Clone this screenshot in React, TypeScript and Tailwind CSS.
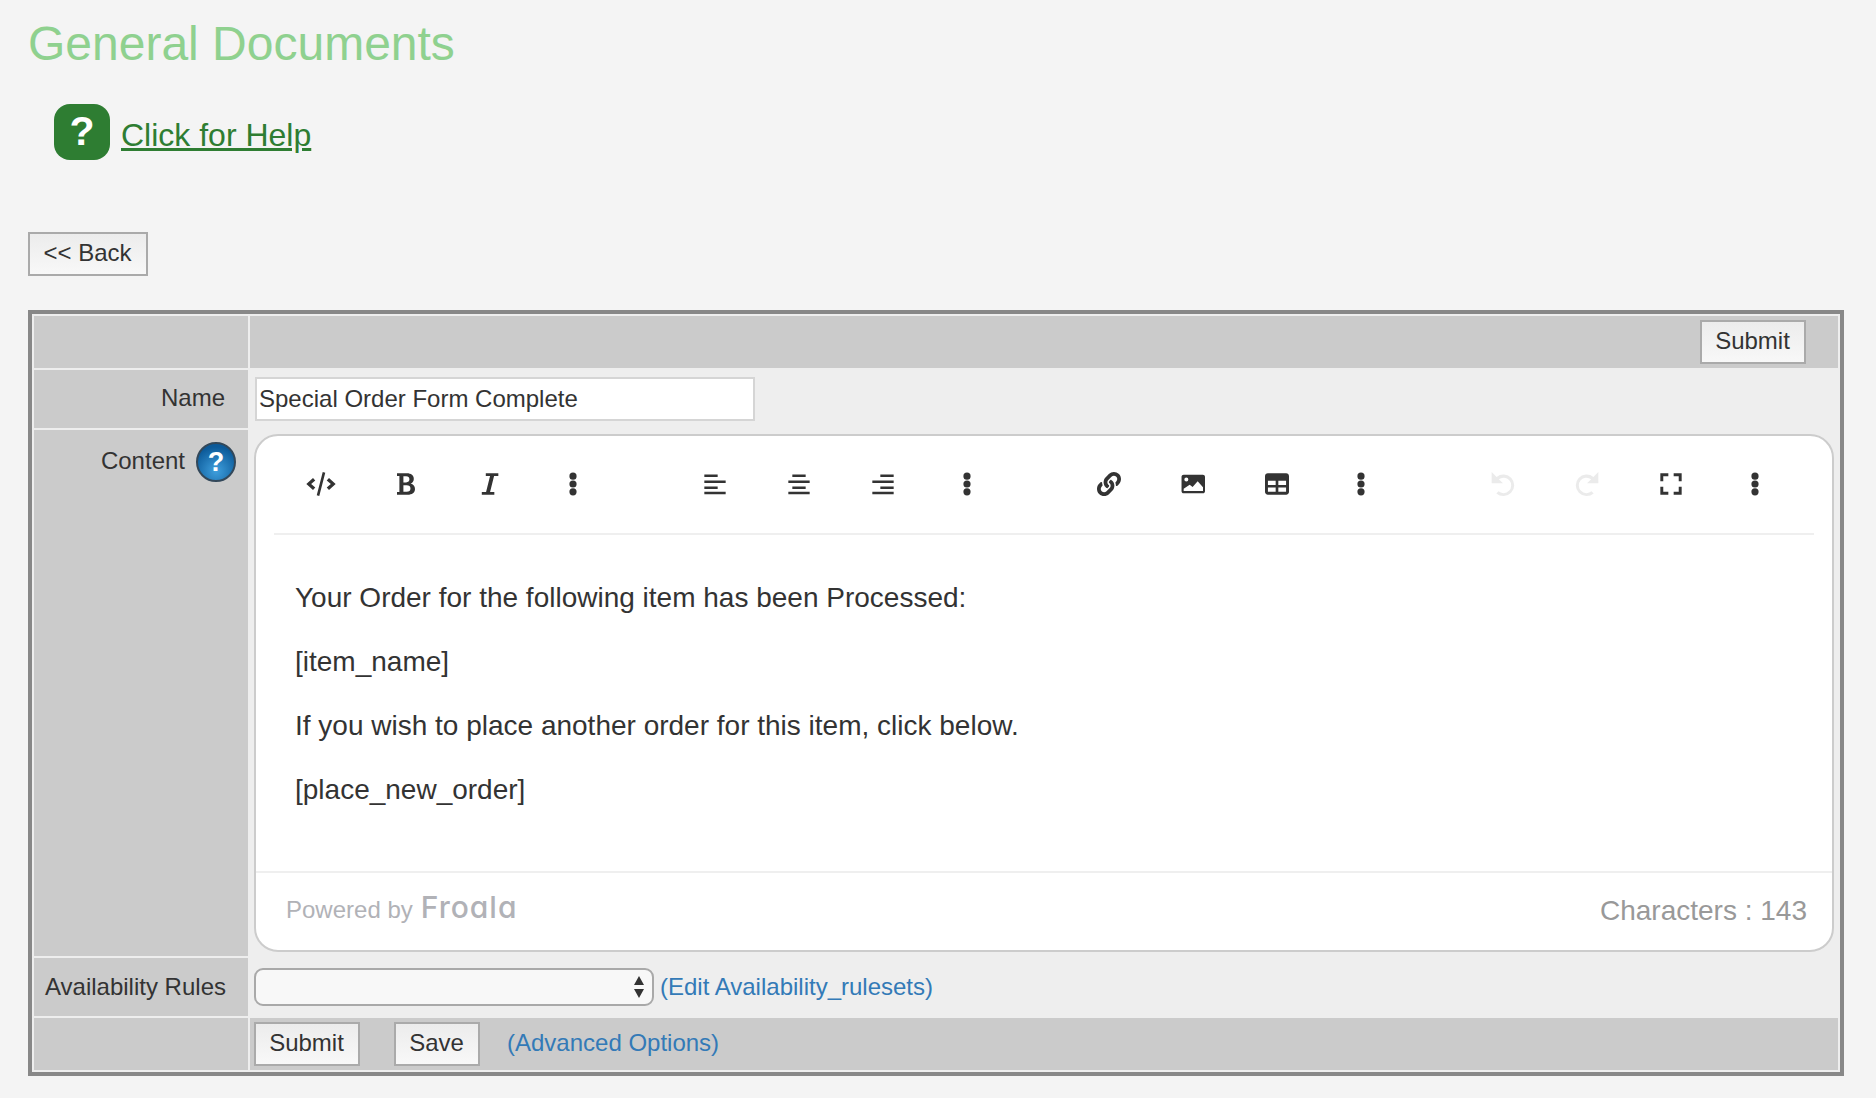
import React from "react";
import { FaLink } from "react-icons/fa";

type IconProps = { d: string; color?: string };

// small 24x24 toolbar glyph, evenodd so the holes stay open
const Glyph: React.FC<IconProps> = ({ d, color = "#333333" }) => (
  <svg width="32" height="32" viewBox="0 0 24 24" fill={color} fillRule="evenodd">
    <path d={d} />
  </svg>
);

const paths = {
  code: "M6 7.500 1 12l5 4.500 1.700-1.800L4.600 12l3.100-2.700zM18 7.500 23 12l-5 4.500-1.700-1.800 3.100-2.700-3.100-2.700zM13.300 3l1.900.5-4.500 17.500-1.900-.5z",
  bold: "M6 4h7.400c3.200 0 5.200 1.600 5.200 4.200 0 1.600-.9 2.900-2.400 3.500 2 .5 3.300 2 3.300 4 0 2.800-2.200 4.300-5.500 4.300H6v-2h1.800V6H6zM10.800 6.200v4.600h2c1.700 0 2.500-.8 2.500-2.300s-.8-2.300-2.500-2.300zM10.800 12.900v4.900h2.400c1.900 0 2.900-.9 2.900-2.500s-1-2.400-2.900-2.400z",
  italic: "M9.600 4H19v2h-3.200l-3 12H16v2H6.600v-2h3.200l3-12H9.600z",
  alignLeft: "M4 4.800h10v1.900H4zM4 9.300h16v1.900H4zM4 13.800h10v1.900H4zM4 17.800h16v1.900H4z",
  alignCenter: "M7 4.800h10v1.900H7zM4 9.300h16v1.900H4zM7 13.800h10v1.900H7zM4 17.800h16v1.900H4z",
  alignRight: "M10 4.800h10v1.900H10zM4 9.300h16v1.900H4zM10 13.800h10v1.900H10zM4 17.800h16v1.900H4z",
  image: "M5 5h14.400c.9 0 1.600.7 1.600 1.600v10.800c0 .9-.7 1.600-1.600 1.600H5c-.9 0-1.600-.7-1.600-1.600V6.600c0-.9.7-1.600 1.600-1.600zM7 7.200a1.500 1.500 0 1 0 0 3 1.500 1.500 0 0 0 0-3zM5 17.200h14.500v-2.700l-4-4.500-3.800 4.300-2.200-1.800L5 15.500z",
  table: "M5.200 4h13.600c1.300 0 2.200.9 2.200 2.200v11.600c0 1.300-.9 2.200-2.200 2.200H5.200C3.900 20 3 19.100 3 17.800V6.200C3 4.900 3.900 4 5.200 4zM5.200 9.600v3.200h5.800V9.600zM13 9.600v3.200h5.800V9.600zM5.200 14.600v3.200h5.800v-3.200zM13 14.600v3.200h5.800v-3.200z",
  undo: "M3.500 3v8.500H12L8.900 8.400A5.800 5.800 0 1 1 8.600 17.500L7 19.100A8.100 8.100 0 1 0 7.200 6.700z",
  redo: "M20.500 3v8.500H12L15.100 8.400A5.800 5.800 0 1 0 15.400 17.500L17 19.100A8.100 8.100 0 1 1 16.800 6.700z",
  fullscreen: "M4 4h6v2.200H6.200V10H4zM14 4h6v6h-2.200V6.200H14zM4 14h2.200v3.800H10V20H4zM17.800 14H20v6h-6v-2.200h3.800z",
  dots: "M12 3.400a2.700 2.700 0 1 1 0 5.400 2.700 2.700 0 0 1 0-5.400zM12 9.300a2.700 2.700 0 1 1 0 5.400 2.700 2.700 0 0 1 0-5.400zM12 15.200a2.700 2.700 0 1 1 0 5.400 2.700 2.700 0 0 1 0-5.400z",
};

const ToolBtn: React.FC<{ children: React.ReactNode }> = ({ children }) => (
  <div className="flex h-[32px] w-[84px] items-center justify-center">{children}</div>
);

const OldButton: React.FC<{ label: string; className?: string }> = ({ label, className = "" }) => (
  <button
    className={`flex h-[44px] items-center justify-center border-2 border-[#aaaaaa] bg-linear-to-b from-[#ececec] to-[#f8f8f8] pr-[1px] pb-[3px] text-[24px] text-[#333333] ${className}`}
  >
    {label}
  </button>
);

const Label: React.FC<{ children: React.ReactNode }> = ({ children }) => (
  <div className="flex items-center justify-end bg-[#cbcbcb] pr-[23px] pb-[2px] text-[24px] text-[#333333]">{children}</div>
);

export default function App() {
  return (
    <div className="min-h-[1098px] w-full bg-[#f4f4f4] pl-[28px] font-['Liberation_Sans',Arial,sans-serif]">
      <h1 className="pt-[20px] text-[48px] leading-none font-normal text-[#8fd18f]">General Documents</h1>

      <div className="mt-[36px] ml-[26px] flex items-center gap-[11px]">
        <div className="flex h-[56px] w-[56px] items-center justify-center rounded-[16px] bg-[#2e7d32] pb-[1px] text-[41px] font-bold text-white">
          ?
        </div>
        <a href="#" className="mt-[6px] text-[32px] text-[#2e7d32] underline">
          Click for Help
        </a>
      </div>

      <OldButton label="<< Back" className="mt-[72px] w-[120px]" />

      <div className="mt-[34px] grid h-[766px] w-[1816px] grid-cols-[214px_1fr] grid-rows-[52px_58px_526px_58px_52px] gap-[2px] border-4 border-[#888888] bg-[#eeeeee] p-[2px]">
        {/* top bar */}
        <div className="bg-[#cbcbcb]" />
        <div className="flex items-center justify-end bg-[#cbcbcb] pr-[32px]">
          <OldButton label="Submit" className="w-[106px]" />
        </div>

        {/* name */}
        <Label>Name</Label>
        <div className="flex items-center pl-[5px]">
          <input
            readOnly
            value="Special Order Form Complete"
            className="h-[44px] w-[500px] border-2 border-[#d5d5d5] bg-white px-[2px] text-[24px] text-[#333333]"
          />
        </div>

        {/* content */}
        <div className="flex items-start justify-end gap-[11px] bg-[#cbcbcb] pt-[12px] pr-[12px] text-[24px] text-[#333333]">
          <span className="mt-[1px]">Content</span>
          <span className="flex h-[40px] w-[40px] items-center justify-center rounded-full border-2 border-[#33485a] bg-[radial-gradient(circle_at_50%_75%,#3f9fdd,#0c5a99_75%)] text-[27px] font-bold text-white">
            ?
          </span>
        </div>
        <div className="pt-[4px] pr-[4px] pl-[4px]">
          <div className="flex h-[518px] flex-col rounded-[24px] border-2 border-[#cccccc] bg-white">
            <div className="flex h-[97px] shrink-0 items-center gap-[58px] pb-[2px] pl-[23px]">
              <div className="flex">
                <ToolBtn><Glyph d={paths.code} /></ToolBtn>
                <ToolBtn><Glyph d={paths.bold} /></ToolBtn>
                <ToolBtn><Glyph d={paths.italic} /></ToolBtn>
                <ToolBtn><Glyph d={paths.dots} /></ToolBtn>
              </div>
              <div className="flex">
                <ToolBtn><Glyph d={paths.alignLeft} /></ToolBtn>
                <ToolBtn><Glyph d={paths.alignCenter} /></ToolBtn>
                <ToolBtn><Glyph d={paths.alignRight} /></ToolBtn>
                <ToolBtn><Glyph d={paths.dots} /></ToolBtn>
              </div>
              <div className="flex">
                <ToolBtn><FaLink size={24} color="#333333" /></ToolBtn>
                <ToolBtn><Glyph d={paths.image} /></ToolBtn>
                <ToolBtn><Glyph d={paths.table} /></ToolBtn>
                <ToolBtn><Glyph d={paths.dots} /></ToolBtn>
              </div>
              <div className="flex">
                <ToolBtn><Glyph d={paths.undo} color="#ebebeb" /></ToolBtn>
                <ToolBtn><Glyph d={paths.redo} color="#ebebeb" /></ToolBtn>
                <ToolBtn><Glyph d={paths.fullscreen} /></ToolBtn>
                <ToolBtn><Glyph d={paths.dots} /></ToolBtn>
              </div>
            </div>
            <div className="mx-[18px] h-[2px] shrink-0 bg-[#efefef]" />

            <div className="h-[336px] shrink-0 pt-[31px] pl-[39px] text-[28px] text-[#333333]">
              <p className="flex h-[64px] items-center">Your Order for the following item has been Processed:</p>
              <p className="flex h-[64px] items-center">[item_name]</p>
              <p className="flex h-[64px] items-center">If you wish to place another order for this item, click below.</p>
              <p className="flex h-[64px] items-center">[place_new_order]</p>
            </div>

            <div className="flex flex-1 items-center justify-between border-t-2 border-[#efefef] pr-[25px] pl-[30px]">
              <div className="mb-[8px] flex items-baseline gap-[8px] text-[#b1b2b7]">
                <span className="text-[24px]">Powered by</span>
                <span className="font-['Inter',sans-serif] text-[30px] font-medium tracking-[1px] [font-feature-settings:'cv11']">Froala</span>
              </div>
              <span className="mb-[2px] text-[28px] text-[#999999]">Characters : 143</span>
            </div>
          </div>
        </div>

        {/* availability rules */}
        <div className="flex items-center bg-[#cbcbcb] pl-[11px] text-[24px] text-[#333333]">Availability Rules</div>
        <div className="flex items-center gap-[6px] pl-[4px]">
          <div className="relative h-[38px] w-[400px]">
            <select className="h-full w-full appearance-none rounded-[9px] border-2 border-[#a9a9a9] bg-[#f8f8f8]" />
            <svg className="absolute top-[7px] right-[9px]" width="12" height="24" viewBox="0 0 12 24" fill="#333333">
              <path d="M6 1 11 10H1zM1 14H11L6 23z" />
            </svg>
          </div>
          <a href="#" className="text-[24px] text-[#337ab7]">
            (Edit Availability_rulesets)
          </a>
        </div>

        {/* bottom bar */}
        <div className="bg-[#cbcbcb]" />
        <div className="flex items-center bg-[#cbcbcb] pl-[4px]">
          <OldButton label="Submit" className="w-[106px]" />
          <OldButton label="Save" className="ml-[34px] w-[86px]" />
          <a href="#" className="ml-[27px] pb-[2px] text-[24px] text-[#337ab7]">
            (Advanced Options)
          </a>
        </div>
      </div>
    </div>
  );
}
